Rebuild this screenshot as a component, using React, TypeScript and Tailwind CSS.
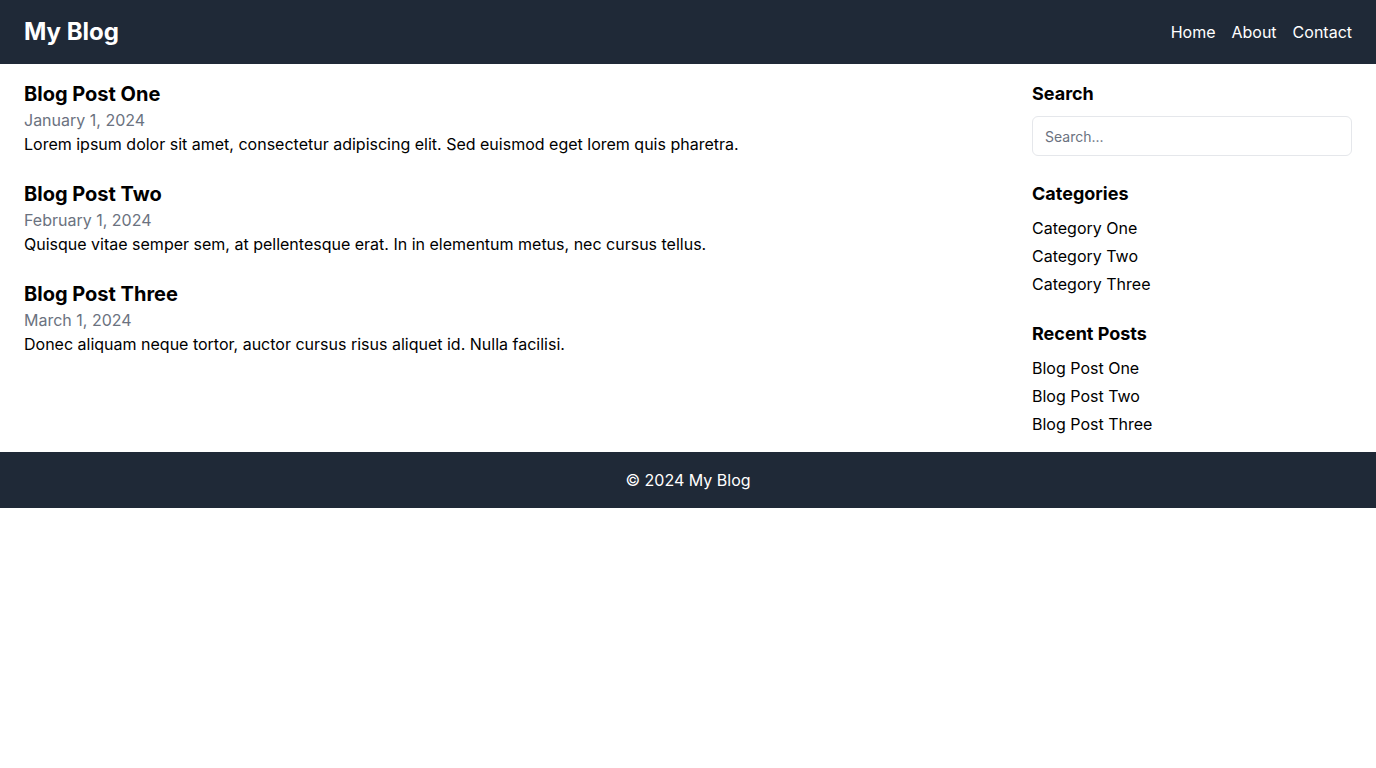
import React from "react";

const posts = [
  { title: "Blog Post One", date: "January 1, 2024", body: "Lorem ipsum dolor sit amet, consectetur adipiscing elit. Sed euismod eget lorem quis pharetra." },
  { title: "Blog Post Two", date: "February 1, 2024", body: "Quisque vitae semper sem, at pellentesque erat. In in elementum metus, nec cursus tellus." },
  { title: "Blog Post Three", date: "March 1, 2024", body: "Donec aliquam neque tortor, auctor cursus risus aliquet id. Nulla facilisi." },
];

export default function App() {
  return (
    <div className="font-['Inter',sans-serif] text-black bg-white">
      <header className="bg-[#1f2937] text-white p-4 px-6 flex items-center justify-between">
        <h1 className="text-2xl font-bold">My Blog</h1>
        <nav className="flex gap-4 text-base">
          <a href="#">Home</a>
          <a href="#">About</a>
          <a href="#">Contact</a>
        </nav>
      </header>
      <main className="flex justify-between px-6 py-4">
        <div className="flex-1">
          {posts.map((p) => (
            <article key={p.title} className="mb-6">
              <h2 className="text-xl font-bold">{p.title}</h2>
              <p className="text-[#6b7280]">{p.date}</p>
              <p>{p.body}</p>
            </article>
          ))}
        </div>
        <aside className="w-80 shrink-0">
          <div className="mb-6">
            <h3 className="text-lg font-bold">Search</h3>
            <input
              type="text"
              placeholder="Search..."
              className="mt-2 w-full h-10 border border-[#e5e7eb] rounded-md px-3 text-sm placeholder:text-[#6b7280] outline-none"
            />
          </div>
          <div className="mb-6">
            <h3 className="text-lg font-bold">Categories</h3>
            <ul className="mt-2 space-y-1">
              <li>Category One</li>
              <li>Category Two</li>
              <li>Category Three</li>
            </ul>
          </div>
          <div>
            <h3 className="text-lg font-bold">Recent Posts</h3>
            <ul className="mt-2 space-y-1">
              <li>Blog Post One</li>
              <li>Blog Post Two</li>
              <li>Blog Post Three</li>
            </ul>
          </div>
        </aside>
      </main>
      <footer className="bg-[#1f2937] text-white p-4 text-center">© 2024 My Blog</footer>
    </div>
  );
}
